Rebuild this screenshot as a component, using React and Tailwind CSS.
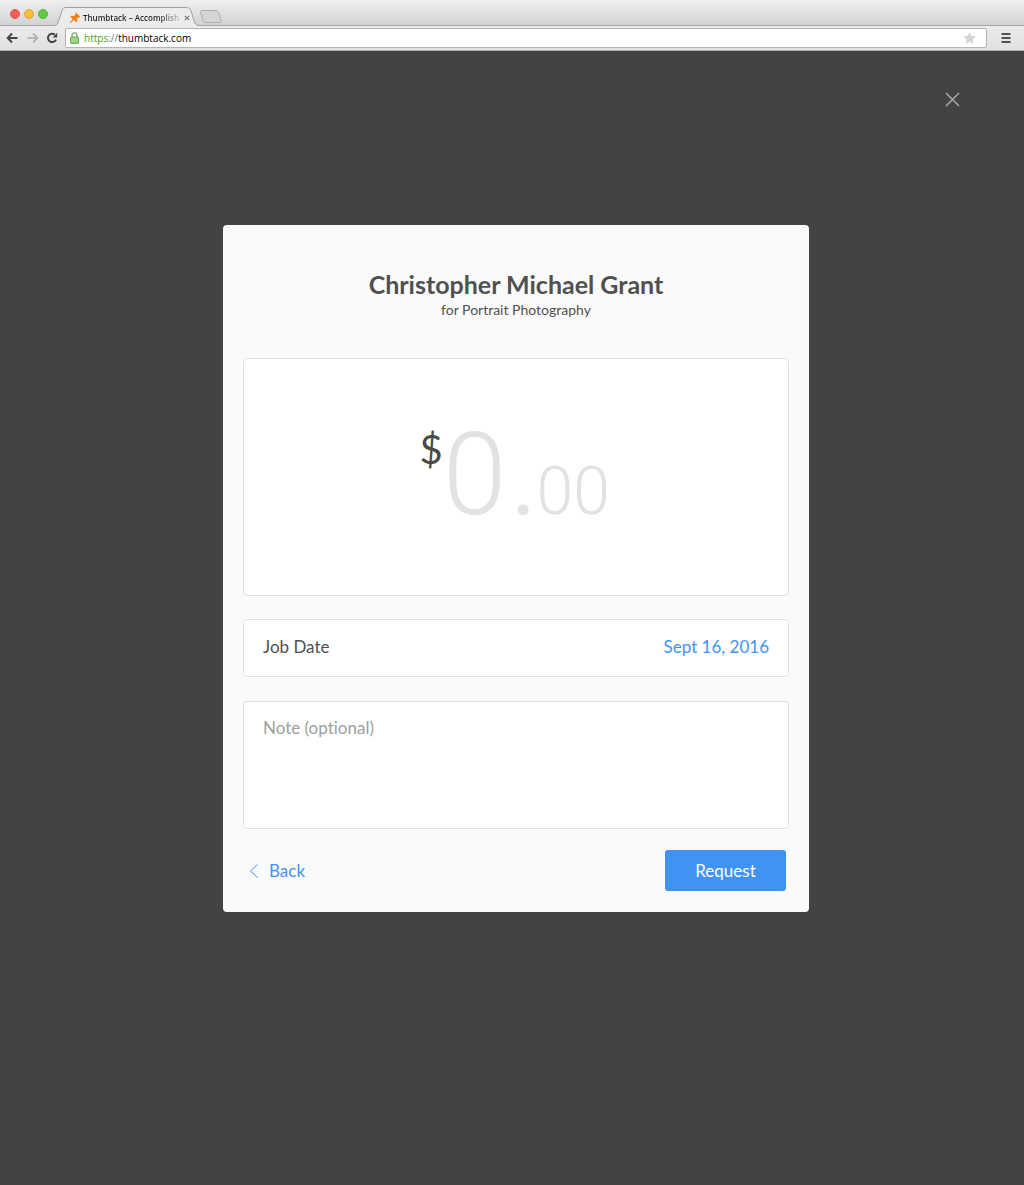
import React, { useState } from 'react';

function PinIcon() {
  return (
    <svg width="12" height="12" viewBox="0 0 12 12" className="shrink-0" aria-hidden="true">
      <path d="M7 .6 11.4 4.8 10.3 5.4 9.4 5.3 8 7 8.3 9.6 7.4 10.2 4.9 8 1 11.4.7 11.1 3.6 7.1 1.3 4.6 2 3.8 4.7 3.9 6.5 2.4 6.4 1.4Z" fill="#f57f17" />
    </svg>
  );
}

function TabStrip() {
  return (
    <div className="flex h-[26px] items-end border-b border-[#a5a5a5] bg-linear-to-b from-[#f0f0f0] to-[#d2d2d2]">
      <div className="flex gap-1 self-center pt-[2px] pl-[10px]">
        <span className="size-[10px] rounded-full border border-[#e0564f] bg-[#f25e57]" />
        <span className="size-[10px] rounded-full border border-[#e0a632] bg-[#fbbd37]" />
        <span className="size-[10px] rounded-full border border-[#50b339] bg-[#5fcb42]" />
      </div>
      <div className="relative z-10 -mb-px ml-[6px] h-[19px] w-[146px]">
        <svg width="146" height="19" viewBox="0 0 146 19" className="absolute inset-0" aria-hidden="true">
          <path d="M0 18.5C3 18.5 3.500 17 4.200 15L8 3.500C8.700 1.200 9.500.5 12 .5H132C135 .5 136 1.500 137 4L140.500 15C141.300 17.500 142.500 18.500 146 18.500V19H0Z" fill="#ececec" />
          <path d="M0 18.5C3 18.5 3.500 17 4.200 15L8 3.500C8.700 1.200 9.500.5 12 .5H132C135 .5 136 1.500 137 4L140.500 15C141.300 17.500 142.500 18.500 146 18.500" fill="none" stroke="#a0a0a0" />
        </svg>
        <div className="relative flex h-full items-center pt-[2px] pr-[10px] pl-[15px]">
          <PinIcon />
          <span className="ml-[2px] w-[97px] overflow-hidden bg-linear-to-r from-[#222] from-75% to-[#ccc] bg-clip-text font-['Open_Sans',sans-serif] text-[8px] font-semibold whitespace-nowrap text-transparent">
            Thumbtack – Accomplish
          </span>
          <button type="button" aria-label="Close tab" className="ml-auto">
            <svg width="6" height="6" viewBox="0 0 6 6" stroke="#777" strokeWidth="1.2">
              <path d="M.8.8 5.200 5.200M5.200.8.8 5.200" />
            </svg>
          </button>
        </div>
      </div>
      <button type="button" aria-label="New tab" className="mb-[2px] -ml-px">
        <svg width="24" height="13" viewBox="0 0 24 13">
          <path d="M3 .5H16.500C18 .5 19 1.200 19.500 2.500L22 10C22.500 11.500 22 12.500 20.500 12.500H7C5.500 12.500 4.700 12 4.200 10.500L1.500 2.500C1 1.200 1.500.5 3 .5Z" fill="#d4d4d4" stroke="#adadad" />
        </svg>
      </button>
    </div>
  );
}

function Toolbar() {
  return (
    <div className="flex h-[25px] items-center border-b border-[#b0b0b0] bg-linear-to-b from-[#ececec] to-[#e2e0e0] pl-[6px]">
      <button type="button" aria-label="Go back">
        <svg width="12" height="12" viewBox="0 0 12 12" fill="none" stroke="#444" strokeWidth="2">
          <path d="M6 1.500 1.700 6 6 10.500M1.700 6H11.500" />
        </svg>
      </button>
      <button type="button" aria-label="Go forward" className="ml-[9px]">
        <svg width="12" height="12" viewBox="0 0 12 12" fill="none" stroke="#aaa" strokeWidth="1.600">
          <path d="M6 1.500 10.300 6 6 10.500M10.300 6H.5" />
        </svg>
      </button>
      <button type="button" aria-label="Reload" className="ml-[7px]">
        <svg width="12" height="12" viewBox="0 0 12 12" fill="none">
          <path d="M8.800 2.600A4.200 4.200 0 1 0 10 7.600" stroke="#444" strokeWidth="2" />
          <path d="M11.200.8V5.400H6.600Z" fill="#444" />
        </svg>
      </button>
      <div className="ml-[7px] flex h-[20px] flex-1 items-center rounded-[2px] border border-[#b4b4b4] bg-white pr-[10px] pl-[4px]">
        <svg width="9" height="12" viewBox="0 0 9 12" aria-hidden="true">
          <path d="M2 6V3.300A2.500 2.500 0 0 1 7 3.300V6" fill="none" stroke="#8f9f89" strokeWidth="1.300" />
          <rect x=".5" y="5" width="8" height="6.500" rx=".7" fill="#8fd070" stroke="#6cae50" />
          <path d="M1.500 7H7.500M1.500 9H7.500" stroke="#b4e59c" strokeWidth=".8" />
        </svg>
        <span className="ml-[5px] flex-1 font-['Open_Sans',sans-serif] text-[10px] leading-none text-black">
          <span className="text-[#45a318]">https</span>
          <span className="text-[#777]">://</span>
          thumbtack.com
        </span>
        <button type="button" aria-label="Bookmark this page">
          <svg width="13" height="12" viewBox="0 0 13 12">
            <path d="M6.500 0 8.400 4.100 13 4.600 9.600 7.600 10.500 12 6.500 9.800 2.500 12 3.400 7.600 0 4.600 4.600 4.100Z" fill="#d6d6d6" />
          </svg>
        </button>
      </div>
      <button type="button" aria-label="Menu" className="mr-[13px] ml-[14px]">
        <svg width="10" height="10" viewBox="0 0 10 10" stroke="#505050" strokeWidth="2">
          <path d="M.5 1H9.500M.5 5H9.500M.5 9H9.500" />
        </svg>
      </button>
    </div>
  );
}

function RequestForm() {
  const [dollars, setDollars] = useState('');
  const [cents, setCents] = useState('');
  const [date, setDate] = useState('Sept 16, 2016');
  const [note, setNote] = useState('');

  const handleSubmit = (e) => {
    e.preventDefault();
  };

  return (
    <form
      onSubmit={handleSubmit}
      className="w-full max-w-[586px] rounded-[4px] bg-[#fafafa] px-5 pt-[43px] pb-[21px] text-[#505050]"
    >
      <header className="text-center">
        <h1 className="text-[25px] leading-8 font-bold">Christopher Michael Grant</h1>
        <p className="text-[14px] leading-5">for Portrait Photography</p>
      </header>

      <div className="mt-[38px] flex h-[238px] items-center justify-center rounded-[4px] border border-[#e0e2e1] bg-white pb-[10px]">
        <div className="flex items-baseline text-[#e0e3e2]">
          <span className="self-start text-[40px] leading-[80px] text-[#4b4a43]">$</span>
          <input
            aria-label="Dollars"
            inputMode="numeric"
            placeholder="0"
            value={dollars}
            onChange={(e) => setDollars(e.target.value)}
            className="h-[120px] w-[67px] font-[Roboto,sans-serif] text-[115px] leading-[120px] font-light text-[#4b4a43] outline-none placeholder:text-[#e0e3e2]"
          />
          <span className="text-[115px] leading-[120px] font-light">.</span>
          <input
            aria-label="Cents"
            inputMode="numeric"
            placeholder="00"
            maxLength={2}
            value={cents}
            onChange={(e) => setCents(e.target.value)}
            className="w-[76px] font-[Roboto,sans-serif] text-[66px] leading-[72px] font-light text-[#4b4a43] outline-none placeholder:text-[#e0e3e2]"
          />
        </div>
      </div>

      <div className="mt-[23px] flex h-[58px] items-center rounded-[4px] border border-[#e0e2e1] bg-white px-[19px] pb-[2px] text-[17px] leading-6">
        <label htmlFor="job-date">Job Date</label>
        <input
          id="job-date"
          value={date}
          onChange={(e) => setDate(e.target.value)}
          className="min-w-0 flex-1 text-right text-[#4295f0] outline-none"
        />
      </div>

      <textarea
        aria-label="Note"
        placeholder="Note (optional)"
        value={note}
        onChange={(e) => setNote(e.target.value)}
        className="mt-6 block h-[128px] w-full resize-none rounded-[4px] border border-[#e0e2e1] bg-white px-[19px] py-[14px] text-[17px] leading-6 outline-none [font-variant-ligatures:none] placeholder:text-[#9ca19f]"
      />

      <footer className="mt-[21px] flex items-center justify-between pr-[3px] pl-[6px] text-[17px] leading-6">
        <a href="#back" className="flex items-center gap-[10px] text-[#4295f0]">
          <svg width="10" height="14" viewBox="0 0 10 14" fill="none" stroke="currentColor" aria-hidden="true">
            <path d="M8.500.5 1.500 7 8.500 13.500" />
          </svg>
          Back
        </a>
        <button type="submit" className="h-[41px] w-[121px] rounded-[3px] bg-[#4093f1] text-white">
          Request
        </button>
      </footer>
    </form>
  );
}

function App() {
  return (
    <div className="flex min-h-screen flex-col bg-[#444243] font-[Lato,sans-serif]">
      <TabStrip />
      <Toolbar />
      <main className="flex flex-1 flex-col">
        <button type="button" aria-label="Close" className="mt-[41px] mr-[64px] self-end text-[#a9a9a9]">
          <svg width="15" height="15" viewBox="0 0 15 15" fill="none" stroke="currentColor" strokeWidth="1.500">
            <path d="M1 1 14 14M14 1 1 14" />
          </svg>
        </button>
        <div className="mt-[118px] mb-6 flex justify-center pl-2">
          <RequestForm />
        </div>
      </main>
    </div>
  );
}

export default App;
